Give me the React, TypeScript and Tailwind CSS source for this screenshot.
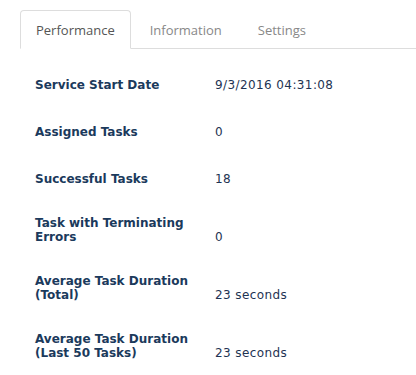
import { useState } from 'react';

const tabs = ['Performance', 'Information', 'Settings'];

const rows: { label: string[]; value: string }[] = [
  { label: ['Service Start Date'], value: '9/3/2016 04:31:08' },
  { label: ['Assigned Tasks'], value: '0' },
  { label: ['Successful Tasks'], value: '18' },
  { label: ['Task with Terminating', 'Errors'], value: '0' },
  { label: ['Average Task Duration', '(Total)'], value: '23 seconds' },
  { label: ['Average Task Duration', '(Last 50 Tasks)'], value: '23 seconds' },
];

export default function App() {
  const [active, setActive] = useState(0);

  return (
    <div className="w-[416px] h-[375px] bg-white overflow-hidden pt-[10px]">
      {/* Tab strip */}
      <div className="ml-[20px] flex gap-[2px] border-b border-[#dddddd] h-[39px] font-['Open_Sans',sans-serif] text-[13px]">
        {tabs.map((tab, i) => (
          <button
            key={tab}
            onClick={() => setActive(i)}
            className={
              i === active
                ? 'h-[39px] px-[15px] pt-[3px] border border-[#dddddd] border-b-white rounded-t-[4px] bg-white text-[#555555]'
                : 'h-[38px] px-[16px] pt-[3px] border border-transparent text-[#888888]'
            }
          >
            {tab}
          </button>
        ))}
      </div>

      {/* Performance details */}
      <div className="pl-[35px] pt-[11px] font-['DejaVu_Sans',Verdana,sans-serif] text-[12px] leading-[14px]">
        {rows.map((row) => (
          <div key={row.value + row.label[0]} className="flex items-end py-[15px] min-h-[47px]">
            <div className="w-[180px] font-bold text-[#1b3a5c]">
              {row.label.map((line) => (
                <div key={line}>{line}</div>
              ))}
            </div>
            <div className="text-[#1e3352] tracking-[0.4px]">{row.value}</div>
          </div>
        ))}
      </div>
    </div>
  );
}
